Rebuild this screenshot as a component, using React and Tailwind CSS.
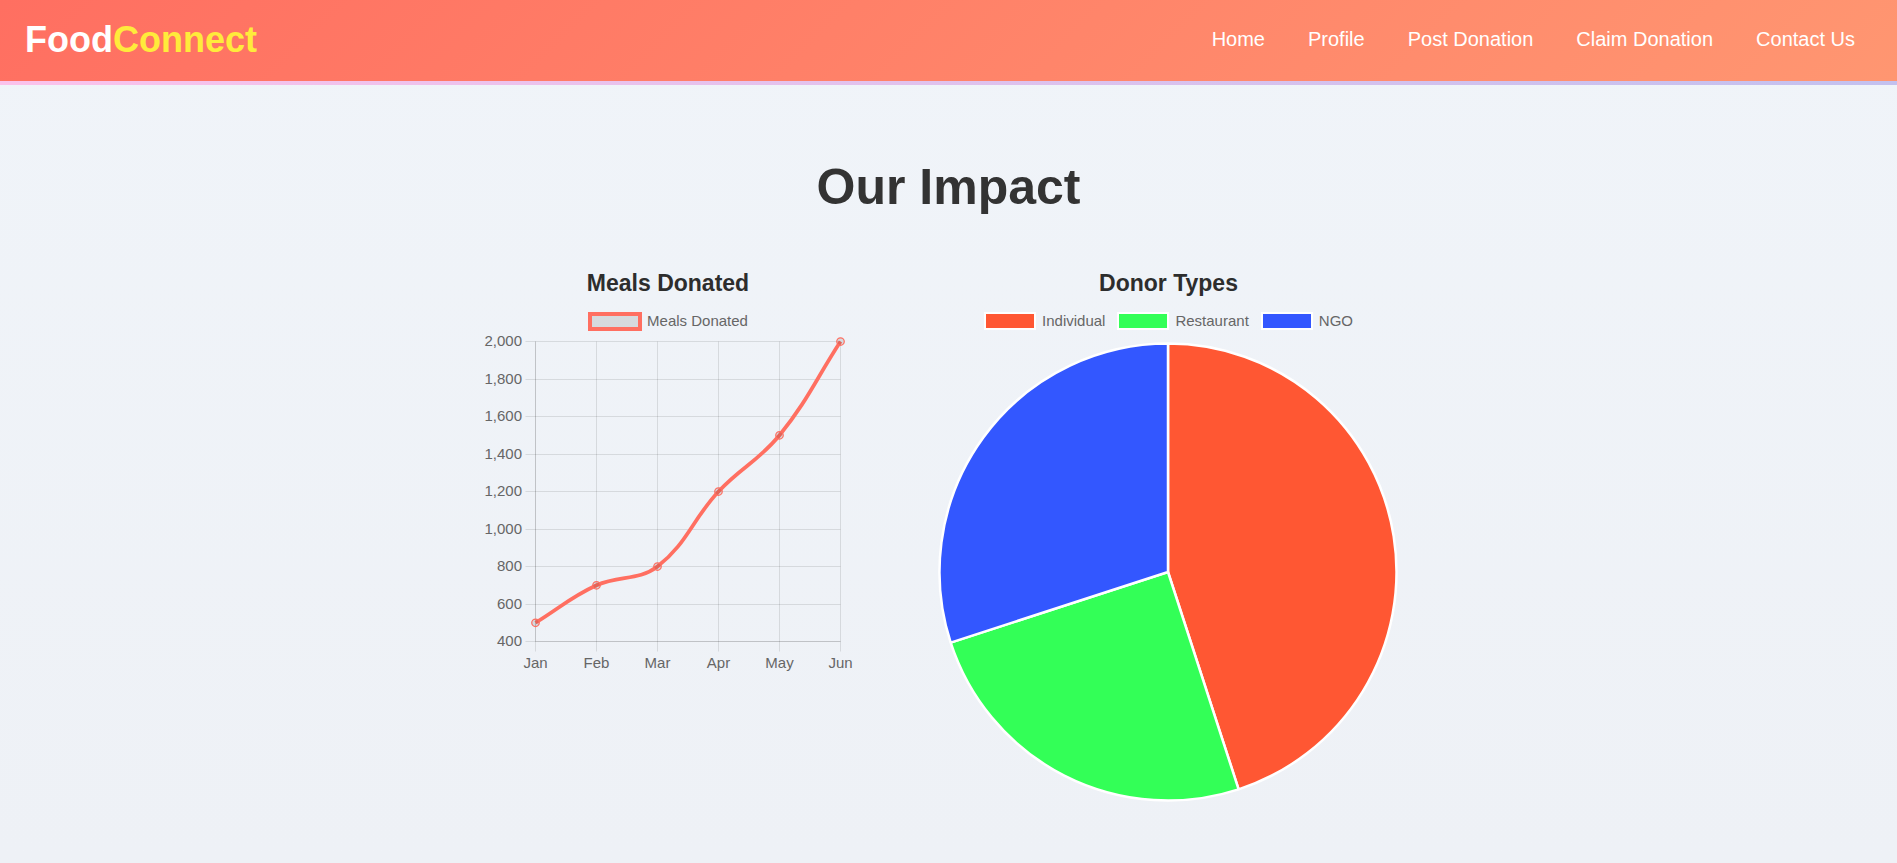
const navLinks = ["Home", "Profile", "Post Donation", "Claim Donation", "Contact Us"];

const meals = [
  { month: "Jan", value: 500 },
  { month: "Feb", value: 700 },
  { month: "Mar", value: 800 },
  { month: "Apr", value: 1200 },
  { month: "May", value: 1500 },
  { month: "Jun", value: 2000 },
];

const donors = [
  { label: "Individual", share: 45, fill: "#ff5733", swatch: "bg-[#ff5733]" },
  { label: "Restaurant", share: 25, fill: "#33ff57", swatch: "bg-[#33ff57]" },
  { label: "NGO", share: 30, fill: "#3357ff", swatch: "bg-[#3357ff]" },
];

// Plot area of the line chart, in viewBox units.
const plot = { left: 52.5, right: 357.5, top: 16.5, bottom: 316.5, min: 400, max: 2000 };
const ticks = [2000, 1800, 1600, 1400, 1200, 1000, 800, 600, 400];

const xAt = (i) => plot.left + (i * (plot.right - plot.left)) / (meals.length - 1);
const yAt = (v) =>
  plot.bottom - ((v - plot.min) / (plot.max - plot.min)) * (plot.bottom - plot.top);

// Cardinal spline whose control points are scaled by neighbouring distances.
function smoothPath(points, tension) {
  const controls = points.map((p, i) => {
    const prev = points[i - 1] || p;
    const next = points[i + 1] || p;
    const d0 = Math.hypot(p.x - prev.x, p.y - prev.y);
    const d1 = Math.hypot(next.x - p.x, next.y - p.y);
    const fa = (tension * d0) / (d0 + d1);
    const fb = (tension * d1) / (d0 + d1);
    const dx = next.x - prev.x;
    const dy = next.y - prev.y;
    return {
      before: { x: p.x - fa * dx, y: p.y - fa * dy },
      after: { x: p.x + fb * dx, y: p.y + fb * dy },
    };
  });
  return points
    .map((p, i) => {
      if (i === 0) return `M${p.x} ${p.y}`;
      const a = controls[i - 1].after;
      const b = controls[i].before;
      return `C${a.x} ${a.y} ${b.x} ${b.y} ${p.x} ${p.y}`;
    })
    .join(" ");
}

function LineChart() {
  const points = meals.map((m, i) => ({ x: xAt(i), y: yAt(m.value) }));
  return (
    <svg viewBox="0 0 370 351" className="-mt-1.5 block w-full overflow-visible" role="img" aria-label="Meals donated per month">
      <g stroke="#000" strokeOpacity="0.1" strokeWidth="1">
        {meals.map((m, i) => (
          <line key={m.month} x1={xAt(i)} x2={xAt(i)} y1={plot.top} y2={plot.bottom + 10} />
        ))}
        {ticks.map((t) => (
          <line key={t} x1={plot.left - 10} x2={plot.right} y1={Math.floor(yAt(t)) + 0.5} y2={Math.floor(yAt(t)) + 0.5} />
        ))}
        <line x1={plot.left} x2={plot.left} y1={plot.top} y2={plot.bottom} />
        <line x1={plot.left} x2={plot.right} y1={plot.bottom} y2={plot.bottom} />
      </g>
      <path d={smoothPath(points, 0.4)} fill="none" stroke="#ff6f61" strokeWidth="3.75" />
      {points.map((p) => (
        <circle key={p.x} cx={p.x} cy={p.y} r="3.75" fill="#000" fillOpacity="0.1" stroke="#ff6f61" strokeWidth="1.25" />
      ))}
      <g className="fill-[#666666] text-[15px]">
        {ticks.map((t) => (
          <text key={t} x="39" y={Math.floor(yAt(t)) + 5} textAnchor="end">
            {t.toLocaleString("en-US")}
          </text>
        ))}
        {meals.map((m, i) => (
          <text key={m.month} x={xAt(i)} y="343" textAnchor="middle">
            {m.month}
          </text>
        ))}
      </g>
    </svg>
  );
}

function PieChart() {
  const cx = 230;
  const cy = 230;
  const r = 228.5;
  const at = (pct) => {
    const angle = (pct / 100) * 2 * Math.PI;
    return `${cx + r * Math.sin(angle)} ${cy - r * Math.cos(angle)}`;
  };
  return (
    <svg viewBox="0 0 461 460" className="mx-auto mt-[11px] block w-full max-w-[461px]" role="img" aria-label="Share of donors by type">
      {donors.map((d, i) => {
        const start = donors.slice(0, i).reduce((sum, o) => sum + o.share, 0);
        return (
          <path
            key={d.label}
            d={`M${cx} ${cy} L${at(start)} A${r} ${r} 0 0 1 ${at(start + d.share)} Z`}
            fill={d.fill}
            stroke="#fff"
            strokeWidth="2.5"
            strokeLinejoin="bevel"
          />
        );
      })}
    </svg>
  );
}

function ChartTitle({ children }) {
  return <h3 className="text-center text-[23px] leading-7 font-bold text-[#2d2d2d]">{children}</h3>;
}

export default function App() {
  return (
    <div className="min-h-screen bg-linear-to-b from-[#f0f4f9] to-[#eef1f6] font-['Liberation_Sans',Arial,sans-serif]">
      <header>
        <div className="flex min-h-[81px] flex-wrap items-center justify-between bg-[linear-gradient(135deg,#ff6f61,#ff9671)] pr-[42px] pb-px pl-[25px]">
          <a href="#" className="text-4xl font-bold text-white">
            Food<span className="text-[#ffeb3b]">Connect</span>
          </a>
          <nav className="pb-0.5">
            <ul className="flex flex-wrap gap-[43px]">
              {navLinks.map((label) => (
                <li key={label}>
                  <a href="#" className="text-xl text-white">{label}</a>
                </li>
              ))}
            </ul>
          </nav>
        </div>
        <div className="h-1 bg-linear-to-r from-[#fbc2eb] to-[#c3c1ef]" />
      </header>

      <main className="pt-[72px] pb-10">
        <h2 className="text-center text-[50px] leading-[60px] font-bold text-[#333333]">Our Impact</h2>
        <div className="mt-[52px] flex flex-wrap items-start justify-center gap-[70px]">
          <section className="w-full max-w-[370px]">
            <ChartTitle>Meals Donated</ChartTitle>
            <div className="mt-[14px] flex h-5 items-center justify-center gap-[5px] text-[15px] text-[#666666]">
              <span className="h-[19px] w-[54px] border-4 border-[#ff6f61] bg-black/10 bg-clip-padding" />
              <span>Meals Donated</span>
            </div>
            <LineChart />
          </section>
          <section className="w-full max-w-[491px]">
            <ChartTitle>Donor Types</ChartTitle>
            <ul className="mt-[14px] flex h-5 items-center justify-center gap-3 text-[15px] text-[#666666]">
              {donors.map((d) => (
                <li key={d.label} className="flex items-center gap-1.5">
                  <span className={`h-[18px] w-[52px] border-2 border-white ${d.swatch}`} />
                  <span>{d.label}</span>
                </li>
              ))}
            </ul>
            <PieChart />
          </section>
        </div>
      </main>
    </div>
  );
}
